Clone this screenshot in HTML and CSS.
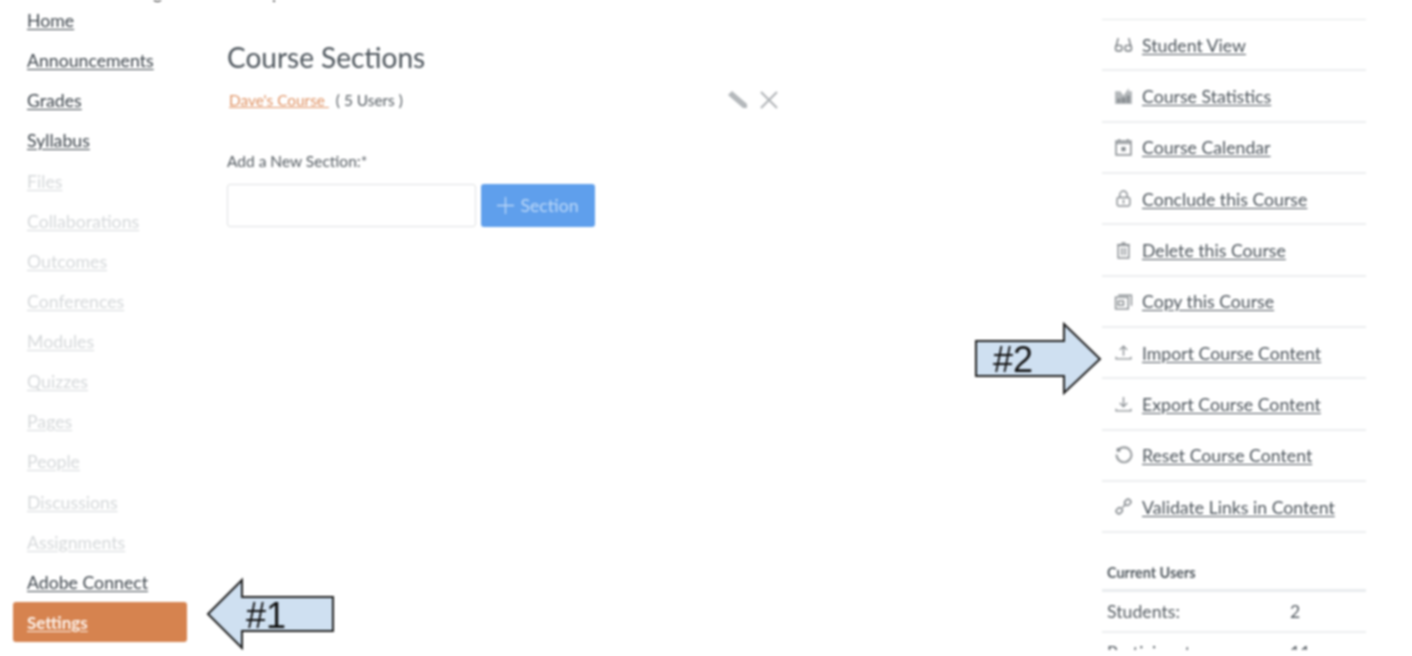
FILE: index.html
```html
<!DOCTYPE html>
<html lang="en">
<head>
  <meta charset="UTF-8">
  <meta name="viewport" content="width=device-width, initial-scale=1.0">
  <title>Course Settings</title>
  <link rel="stylesheet" href="styles.css">
</head>
<body>
  <div class="page">
    <div class="cut-line">Select the Settings link at the top</div>
    <div class="columns">
      <nav class="side-nav">
        <a class="nav-link" href="#">Home</a>
        <a class="nav-link" href="#">Announcements</a>
        <a class="nav-link" href="#">Grades</a>
        <a class="nav-link" href="#">Syllabus</a>
        <a class="nav-link off" href="#">Files</a>
        <a class="nav-link off" href="#">Collaborations</a>
        <a class="nav-link off" href="#">Outcomes</a>
        <a class="nav-link off" href="#">Conferences</a>
        <a class="nav-link off" href="#">Modules</a>
        <a class="nav-link off" href="#">Quizzes</a>
        <a class="nav-link off" href="#">Pages</a>
        <a class="nav-link off" href="#">People</a>
        <a class="nav-link off" href="#">Discussions</a>
        <a class="nav-link off" href="#">Assignments</a>
        <a class="nav-link" href="#">Adobe Connect</a>
        <a class="nav-link active" href="#">Settings</a>
      </nav>

      <main class="content">
        <h1>Course Sections</h1>
        <div class="section-row">
          <div><a class="course-link" href="#">Dave's Course&nbsp;</a> <span class="user-count">( 5 Users )</span></div>
          <div class="section-tools">
            <svg width="22" height="20" viewBox="0 0 22 20"><path d="M1 5 L5 1 L20 14 L20 18 L16 18 Z" fill="#b4b8bb"/></svg>
            <svg width="20" height="20" viewBox="0 0 20 20"><path d="M2 2 L18 18 M18 2 L2 18" stroke="#b0b4b7" stroke-width="2" fill="none"/></svg>
          </div>
        </div>
        <label class="field-label">Add a New Section:*</label>
        <div class="add-row">
          <input class="section-input" type="text">
          <button class="add-button">
            <svg width="17" height="17" viewBox="0 0 17 17"><path d="M8.500 0 V17 M0 8.500 H17" stroke="#bcd8f8" stroke-width="1.300"/></svg>
            Section
          </button>
        </div>
      </main>

      <aside class="right-col">
        <ul class="action-list">
          <li>
            <svg class="ico" viewBox="0 0 18 18"><path d="M4 3 L2 11 M14 3 L16 11" stroke="#7f8488" stroke-width="1.500" fill="none"/><rect x="1.500" y="10" width="6" height="5" rx="1.500" stroke="#7f8488" stroke-width="1.500" fill="none"/><rect x="10.500" y="10" width="6" height="5" rx="1.500" stroke="#7f8488" stroke-width="1.500" fill="none"/></svg>
            <a href="#">Student View</a>
          </li>
          <li>
            <svg class="ico" viewBox="0 0 18 18"><path d="M1 4 H6 L9 8 L14 1 L14 4 H17 V16 H1 Z" fill="#b4b8bb"/><path d="M3 15 V11 H6 V15 M7 15 V10 H11 V15 M12 15 V8 H15 V15" fill="#8a8f93"/></svg>
            <a href="#">Course Statistics</a>
          </li>
          <li>
            <svg class="ico" viewBox="0 0 18 18"><rect x="2" y="3" width="14" height="13" fill="none" stroke="#8a8f93" stroke-width="1.500"/><path d="M2 5 H16 M5 1 V3 M13 1 V3" stroke="#8a8f93" stroke-width="1.600"/><rect x="7" y="8.500" width="4" height="4" fill="#8a8f93"/></svg>
            <a href="#">Course Calendar</a>
          </li>
          <li>
            <svg class="ico" viewBox="0 0 18 18"><rect x="3" y="8" width="12" height="8" rx="1.500" fill="none" stroke="#8a8f93" stroke-width="1.400"/><path d="M5.500 8 V5.500 a3.500 3.500 0 0 1 7 0 V8 M9 10 V14" fill="none" stroke="#8a8f93" stroke-width="1.400"/></svg>
            <a href="#">Conclude this Course</a>
          </li>
          <li>
            <svg class="ico" viewBox="0 0 18 18"><path d="M4 4 H14 V16 H4 Z M3 3.500 H15 M7 2 H11 M7.500 6.500 V13.500 M10.500 6.500 V13.500" fill="none" stroke="#8a8f93" stroke-width="1.400"/></svg>
            <a href="#">Delete this Course</a>
          </li>
          <li>
            <svg class="ico" viewBox="0 0 18 18"><rect x="1.500" y="5" width="12" height="11" fill="#fff" stroke="#8a8f93" stroke-width="1.400"/><path d="M4 3 H16.500 V13 M4 8.500 H9 V12.500 H4 Z" fill="none" stroke="#8a8f93" stroke-width="1.400"/></svg>
            <a href="#">Copy this Course</a>
          </li>
          <li>
            <svg class="ico" viewBox="0 0 18 18"><path d="M9 12 V3 M5.500 6.500 L9 3 L12.500 6.500 M2 13 V15 H16 V13" fill="none" stroke="#8a8f93" stroke-width="1.300"/></svg>
            <a href="#">Import Course Content</a>
          </li>
          <li>
            <svg class="ico" viewBox="0 0 18 18"><path d="M9 2 V11 M5.500 7.500 L9 11 L12.500 7.500 M2 13 V15 H16 V13" fill="none" stroke="#8a8f93" stroke-width="1.300"/></svg>
            <a href="#">Export Course Content</a>
          </li>
          <li>
            <svg class="ico" viewBox="0 0 18 18"><path d="M4 4 A7 7 0 1 1 2.500 8" fill="none" stroke="#9a9ea1" stroke-width="2"/><path d="M2.500 2 H6 V5.500 H2.500 Z" fill="#8a8f93"/></svg>
            <a href="#">Reset Course Content</a>
          </li>
          <li>
            <svg class="ico" viewBox="0 0 18 18"><path d="M8 10 L11 7" stroke="#8a8f93" stroke-width="1.400"/><rect x="10" y="2.500" width="6" height="5" rx="2.500" transform="rotate(-45 13 5)" fill="none" stroke="#8a8f93" stroke-width="1.600"/><rect x="2" y="10.500" width="6" height="5" rx="2.500" transform="rotate(-45 5 13)" fill="none" stroke="#8a8f93" stroke-width="1.600"/></svg>
            <a href="#">Validate Links in Content</a>
          </li>
        </ul>
        <h2 class="users-title">Current Users</h2>
        <table class="users-table">
          <tr><td>Students:</td><td>2</td></tr>
          <tr><td>Participants:</td><td>11</td></tr>
        </table>
      </aside>
    </div>

    <!-- callouts sit on top of the screenshot -->
    <div class="callout callout-one">
      <svg width="130" height="74" viewBox="0 0 130 74"><path d="M2 37 L36 3 V20 H127 V54 H36 V71 Z" fill="#cfe0f1" stroke="#1f1f1f" stroke-width="2"/></svg>
      <span class="callout-text">#1</span>
    </div>
    <div class="callout callout-two">
      <svg width="130" height="74" viewBox="0 0 130 74"><path d="M126 37 L90 2 V19 H2 V54 H90 V71 Z" fill="#cfe0f1" stroke="#1f1f1f" stroke-width="2"/></svg>
      <span class="callout-text">#2</span>
    </div>
  </div>
</body>
</html>
```

FILE: styles.css
```css
html, body {
  margin: 0;
  padding: 0;
  background: #fff;
}
body {
  height: 656px;
  overflow: hidden;
  font-family: Lato, "Open Sans", sans-serif;
}
.page {
  position: relative;
  width: 1412px;
  height: 650px;
  overflow: hidden;
  background: #fff;
  filter: blur(0.8px);
}
.cut-line {
  position: absolute;
  top: -18px;
  left: 26px;
  font-size: 17.700px;
  line-height: 22px;
  color: #333;
}
.columns {
  display: flex;
  height: 100%;
}

/* left nav */
.side-nav {
  width: 174px;
  margin-left: 13px;
  flex: none;
  display: flex;
  flex-direction: column;
}
.nav-link {
  height: 40.130px;
  line-height: 41px;
  padding-left: 14px;
  font-size: 17.700px;
  color: #3d454c;
  text-decoration: underline;
  text-underline-offset: 2px;
}
.nav-link.off {
  color: #d5d8da;
}
.nav-link.active {
  background: #d6834f;
  color: #fdf3ec;
  border-radius: 3px;
  font-weight: bold;
  font-size: 17px;
}

/* middle */
.content {
  width: 560px;
  margin-left: 40px;
  flex: none;
}
.content h1 {
  margin: 40px 0 0;
  font-size: 28px;
  line-height: 34px;
  font-weight: normal;
  color: #4e565d;
}
.section-row {
  display: flex;
  justify-content: space-between;
  align-items: center;
  height: 32px;
  margin-top: 10px;
  padding-left: 2px;
  width: 550px;
  font-size: 15.400px;
}
.course-link {
  color: #e09364;
}
.user-count {
  color: #555c62;
  margin-left: 3px;
}
.section-tools {
  display: flex;
  gap: 10px;
  align-items: center;
}
.field-label {
  display: block;
  margin-top: 36px;
  font-size: 15.500px;
  line-height: 18px;
  color: #555c62;
}
.add-row {
  display: flex;
  gap: 5px;
  margin-top: 14px;
}
.section-input {
  box-sizing: border-box;
  width: 249px;
  height: 43px;
  border: 1px solid #dfe1e3;
  border-radius: 3px;
}
.add-button {
  display: flex;
  align-items: center;
  justify-content: center;
  gap: 6px;
  width: 114px;
  height: 43px;
  border: 0;
  border-radius: 3px;
  background: #5f9fec;
  color: #bcd8f8;
  font-family: inherit;
  font-size: 17.700px;
}

/* right */
.right-col {
  width: 264px;
  margin-left: 315px;
  flex: none;
  padding-top: 19px;
}
.action-list {
  list-style: none;
  margin: 0;
  padding: 0;
  border-top: 1px solid #e4e7e8;
}
.action-list li {
  box-sizing: border-box;
  display: flex;
  align-items: center;
  height: 51.350px;
  padding-left: 12px;
  gap: 9px;
  border-bottom: 2px solid #eceeef;
}
.ico {
  width: 19px;
  height: 19px;
  flex: none;
}
.action-list a {
  padding-top: 1px;
  font-size: 17.700px;
  color: #4d555c;
  text-decoration: underline;
  text-underline-offset: 2px;
}
.users-title {
  margin: 31px 0 0 5px;
  font-size: 14.400px;
  line-height: 18px;
  font-weight: bold;
  color: #50585e;
}
.users-table {
  width: 264px;
  margin-top: 7px;
  border-collapse: collapse;
  border-top: 3px solid #e9ecee;
  font-size: 17.700px;
  color: #555c62;
}
.users-table td {
  height: 39px;
  padding: 0 0 0 5px;
  border-bottom: 2px solid #eceeef;
}
.users-table td:first-child {
  width: 178px;
}

/* arrows */
.callout {
  position: absolute;
  width: 130px;
  height: 74px;
}
.callout svg {
  display: block;
}
.callout-text {
  position: absolute;
  font-family: "Liberation Sans", Arial, sans-serif;
  font-size: 36px;
  line-height: 40px;
  color: #111;
}
.callout-one {
  left: 206px;
  top: 577px;
}
.callout-one .callout-text {
  left: 40px;
  top: 19px;
}
.callout-two {
  left: 974px;
  top: 322px;
}
.callout-two .callout-text {
  left: 19px;
  top: 18px;
}
```
